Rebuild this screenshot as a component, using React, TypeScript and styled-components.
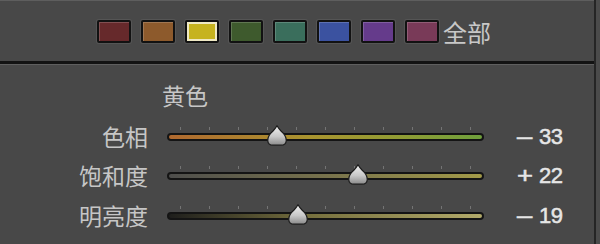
import React from "react";
import styled, { createGlobalStyle } from "styled-components";

const swatches = [
  { color: "#66292b", selected: false },
  { color: "#8d5a2c", selected: false },
  { color: "#c6b31f", selected: true },
  { color: "#3e5a2d", selected: false },
  { color: "#3a6e5c", selected: false },
  { color: "#3b52a0", selected: false },
  { color: "#653b8b", selected: false },
  { color: "#793a58", selected: false },
];

const sliders = [
  { label: "色相", value: -33, track: "linear-gradient(90deg, #b0692f 0%, #a9942f 45%, #8f9c34 75%, #6fa03c 100%)" },
  { label: "饱和度", value: 22, track: "linear-gradient(90deg, #4e4e4c 0%, #77724c 50%, #a29a48 100%)" },
  { label: "明亮度", value: -19, track: "linear-gradient(90deg, #1e1e1c 0%, #76703e 45%, #b2aa6a 100%)" },
];

const TRACK_W = 317;
const TICK_INSET = 13;

const App: React.FC = () => {
  return (
    <>
      <GlobalStyle />
      <Frame>
        <Main>
          <SwatchBar>
            {swatches.map((s, i) => (
              <Swatch key={i} fill={s.color} selected={s.selected} />
            ))}
            <AllLabel>全部</AllLabel>
          </SwatchBar>
          <Divider />
          <Content>
            <Title>黄色</Title>
            <Rows>
              {sliders.map((s) => (
                <SliderRow key={s.label} label={s.label} value={s.value} track={s.track} />
              ))}
            </Rows>
          </Content>
        </Main>
        <EdgeLine />
        <Outside />
      </Frame>
    </>
  );
};

const SliderRow: React.FC<{ label: string; value: number; track: string }> = ({
  label,
  value,
  track,
}) => {
  const span = TRACK_W - TICK_INSET * 2;
  const left = TICK_INSET + ((value + 100) / 200) * span;
  return (
    <Row>
      <Label>{label}</Label>
      <Slider>
        <Ticks>
          {Array.from({ length: 11 }).map((_, i) => (
            <Tick key={i} />
          ))}
        </Ticks>
        <Track style={{ background: track }} />
        <Thumb style={{ left: left - 10 }}>
          <svg width="20" height="21" viewBox="0 0 20 21">
            <defs>
              <linearGradient id={`g${label}`} x1="0" y1="0" x2="0" y2="1">
                <stop offset="0" stopColor="#f0f0f0" />
                <stop offset="0.55" stopColor="#c8c8c8" />
                <stop offset="1" stopColor="#8a8a8a" />
              </linearGradient>
            </defs>
            <path
              d="M10 0.8 C11 2.5, 12 4, 14 6 C17.5 9, 19.5 12, 19.2 16 C19 19, 17 20.2, 14 20.2 L6 20.2 C3 20.2, 1 19, 0.8 16 C0.5 12, 2.5 9, 6 6 C8 4, 9 2.5, 10 0.8 Z"
              fill={`url(#g${label})`}
              stroke="#1c1c1c"
              strokeWidth="1.2"
            />
          </svg>
        </Thumb>
      </Slider>
      <Value>
        <Sign>{value < 0 ? "–" : "+"}</Sign>
        {Math.abs(value)}
      </Value>
    </Row>
  );
};

export default App;

const GlobalStyle = createGlobalStyle`
  html, body {
    margin: 0;
    padding: 0;
    background: #484848;
  }
  body {
    font-family: "Noto Sans CJK SC", "Noto Sans", sans-serif;
  }
`;

const Frame = styled.div`
  width: 600px;
  height: 244px;
  display: flex;
  background: #484848;
  overflow: hidden;
`;

const Main = styled.div`
  width: 594px;
  display: flex;
  flex-direction: column;
`;

const EdgeLine = styled.div`
  width: 2px;
  background: #252525;
`;

const Outside = styled.div`
  flex: 1;
  background: #4b4b4b;
`;

const SwatchBar = styled.div`
  height: 61px;
  border-top: 1px solid #5e5e5e;
  display: flex;
  align-items: center;
  gap: 10px;
  padding-left: 97px;
  box-sizing: border-box;
  padding-top: 1px;
`;

const Swatch = styled.div<{ fill: string; selected: boolean }>`
  width: 34px;
  height: 23px;
  box-sizing: border-box;
  border: 2px solid #121212;
  border-radius: 2px;
  background: ${({ fill }) => fill};
  box-shadow: ${({ selected }) =>
    selected
      ? "inset 0 0 0 2px #efe9c4, 0 0 0 1px #555"
      : "inset 1px 1px 0 rgba(255,255,255,0.18), 0 0 0 1px #555"};
`;

const AllLabel = styled.span`
  margin-left: -6px;
  font-size: 24px;
  line-height: 26px;
  color: #c8c8c8;
`;

const Divider = styled.div`
  height: 3px;
  background: #131313;
  border-bottom: 1px solid #5f5f5f;
`;

const Content = styled.div`
  display: flex;
  flex-direction: column;
`;

const Title = styled.div`
  padding: 18px 0 0 162px;
  font-size: 23px;
  line-height: 24px;
  color: #c6c6c6;
`;

const Rows = styled.div`
  margin-top: 10px;
  display: flex;
  flex-direction: column;
`;

const Row = styled.div`
  height: 39.5px;
  display: flex;
  align-items: center;
`;

const Label = styled.div`
  width: 148px;
  text-align: right;
  font-size: 23px;
  line-height: 24px;
  color: #c6c6c6;
  margin-top: -2px;
`;

const Slider = styled.div`
  position: relative;
  width: ${TRACK_W}px;
  height: 8px;
  margin-left: 19px;
`;

const Track = styled.div`
  height: 8px;
  box-sizing: border-box;
  border: 2px solid #141414;
  border-radius: 4px;
`;

const Ticks = styled.div`
  position: absolute;
  left: ${TICK_INSET}px;
  right: ${TICK_INSET}px;
  top: -6px;
  height: 3px;
  display: flex;
  justify-content: space-between;
`;

const Tick = styled.div`
  width: 1px;
  height: 3px;
  background: #747474;
`;

const Thumb = styled.div`
  position: absolute;
  top: -8px;
  width: 20px;
  height: 21px;
  svg {
    display: block;
  }
`;

const Value = styled.div`
  margin-left: 33px;
  display: flex;
  font-family: "Liberation Sans", Arial, sans-serif;
  font-size: 22px;
  line-height: 24px;
  color: #e6e6e6;
  -webkit-text-stroke: 0.5px #e6e6e6;
  letter-spacing: -0.5px;
`;

const Sign = styled.span`
  display: inline-block;
  width: 22px;
  transform: scaleX(1.25);
  transform-origin: left center;
`;
